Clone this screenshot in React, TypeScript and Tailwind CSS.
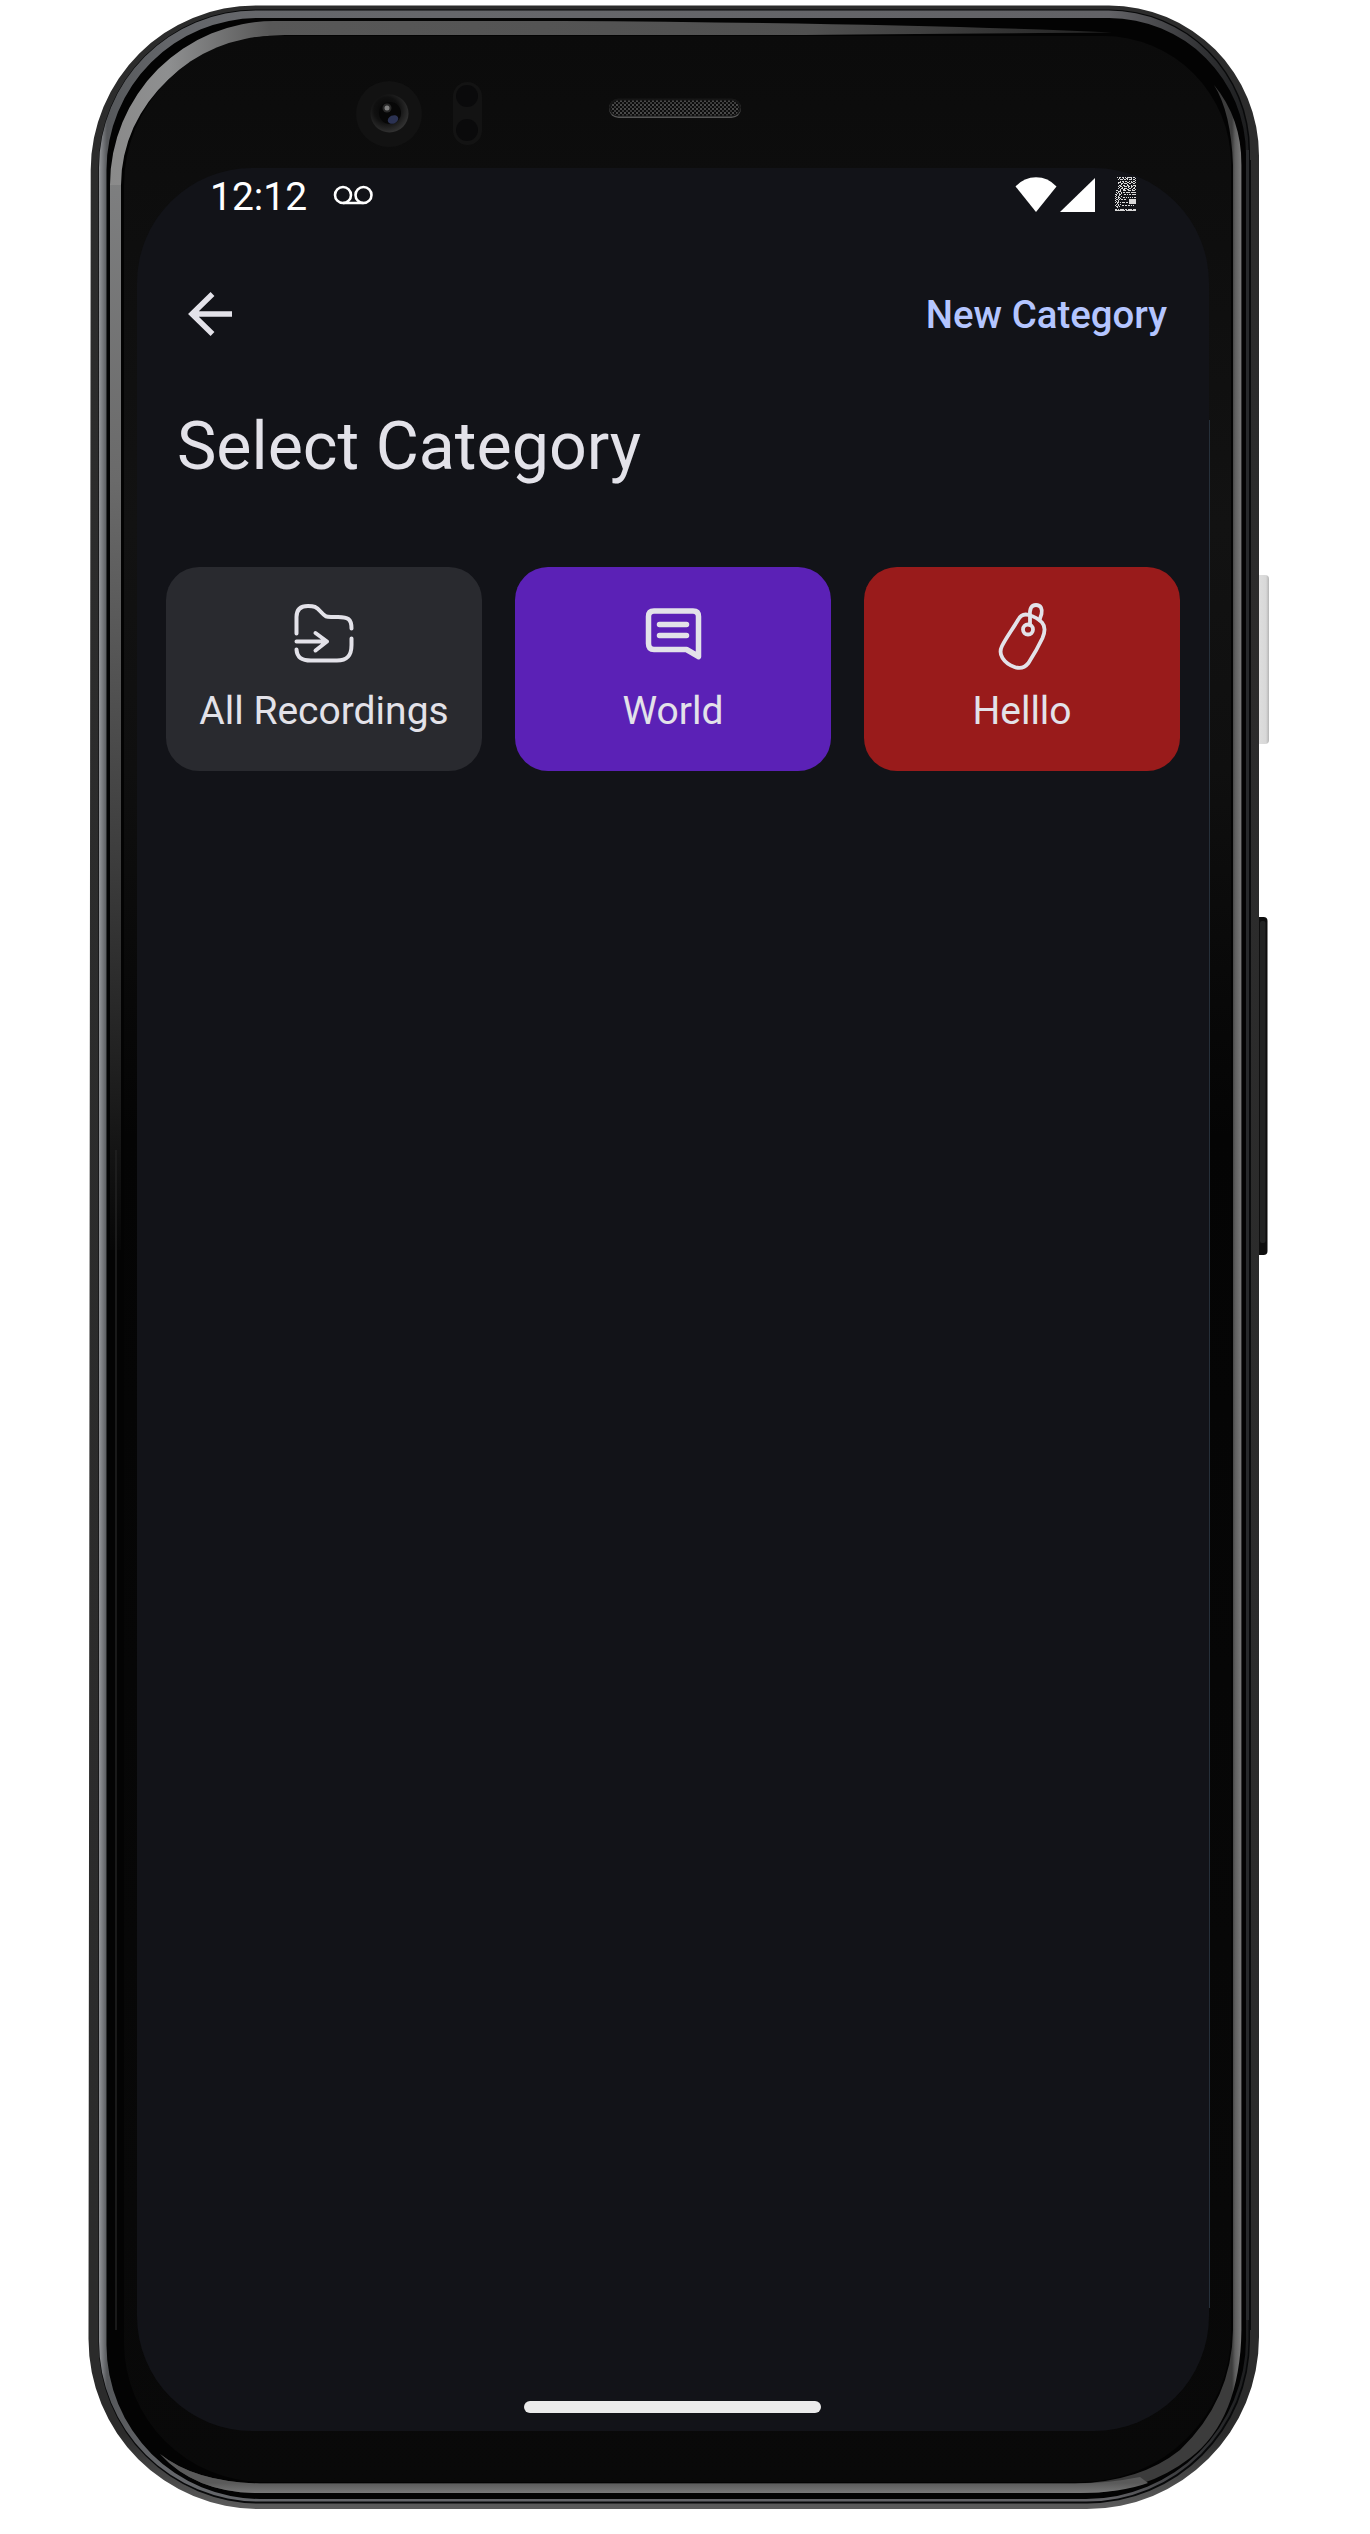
const rr = (l: number, t: number, r: number, b: number, tl: number, tr: number, br: number, bl: number) =>
  `M${l + tl} ${t}H${r - tr}A${tr} ${tr} 0 0 1 ${r} ${t + tr}V${b - br}A${br} ${br} 0 0 1 ${r - br} ${b}H${l + bl}A${bl} ${bl} 0 0 1 ${l} ${b - bl}V${t + tl}A${tl} ${tl} 0 0 1 ${l + tl} ${t}Z`;

function DeviceArt() {
  return (
    <svg className="absolute left-0 top-0 h-[2534px] w-[1370px]" viewBox="0 0 1370 2534" aria-hidden="true">
      <defs>
        <linearGradient id="shell" x1="0" y1="0" x2="0" y2="1">
          <stop offset="0" stopColor="#2c2c2c" />
          <stop offset=".93" stopColor="#2b2b2b" />
          <stop offset=".97" stopColor="#2b2b2b" />
          <stop offset="1" stopColor="#5c5c5c" />
        </linearGradient>
        <linearGradient id="band" x1="99" x2="1248" y1="0" y2="0" gradientUnits="userSpaceOnUse">
          <stop offset="0" stopColor="#94969a" />
          <stop offset=".007" stopColor="#56585b" />
          <stop offset=".06" stopColor="#64666a" />
          <stop offset=".3" stopColor="#66676b" />
          <stop offset=".88" stopColor="#626266" />
          <stop offset=".97" stopColor="#2c2d2f" />
          <stop offset="1" stopColor="#1c1d1e" />
        </linearGradient>
        <linearGradient id="rimTop" x1="108" x2="1115" y1="0" y2="0" gradientUnits="userSpaceOnUse">
          <stop offset="0" stopColor="#8a8a8a" />
          <stop offset=".06" stopColor="#8e8f90" />
          <stop offset=".16" stopColor="#585858" />
          <stop offset=".7" stopColor="#505050" />
          <stop offset="1" stopColor="#222" />
        </linearGradient>
        <linearGradient id="rimLeft" x1="0" x2="0" y1="150" y2="1250" gradientUnits="userSpaceOnUse">
          <stop offset="0" stopColor="#808182" />
          <stop offset=".3" stopColor="#6a6a6a" />
          <stop offset=".65" stopColor="#3c3c3c" />
          <stop offset="1" stopColor="#060606" />
        </linearGradient>
        <linearGradient id="rimRight" x1="1232" x2="1242" y1="0" y2="0" gradientUnits="userSpaceOnUse">
          <stop offset="0" stopColor="#3c3c3c" />
          <stop offset=".3" stopColor="#5e5e5e" />
          <stop offset=".85" stopColor="#767676" />
          <stop offset="1" stopColor="#555" />
        </linearGradient>
        <linearGradient id="rimBottom" x1="0" x2="0" y1="2483" y2="2493" gradientUnits="userSpaceOnUse">
          <stop offset="0" stopColor="#5a5a5a" />
          <stop offset="1" stopColor="#787878" />
        </linearGradient>
        <linearGradient id="glass" x1="0" x2="0" y1="0" y2="1">
          <stop offset="0" stopColor="#0b0b0b" />
          <stop offset=".2" stopColor="#121212" />
          <stop offset=".3" stopColor="#0f0f0f" />
          <stop offset=".45" stopColor="#040404" />
          <stop offset="1" stopColor="#090909" />
        </linearGradient>
        <linearGradient id="power" x1="0" x2="1" y1="0" y2="0">
          <stop offset="0" stopColor="#c4c4c4" />
          <stop offset=".3" stopColor="#dedede" />
          <stop offset=".8" stopColor="#d8d8d8" />
          <stop offset="1" stopColor="#b5b5b5" />
        </linearGradient>
        <radialGradient id="lens" cx=".42" cy=".4" r=".6">
          <stop offset="0" stopColor="#050505" />
          <stop offset=".55" stopColor="#101010" />
          <stop offset="1" stopColor="#303030" />
        </radialGradient>
        <pattern id="mesh" width="4" height="4" patternUnits="userSpaceOnUse">
          <rect width="4" height="4" fill="#0c0c0c" />
          <rect width="2" height="2" fill="#4a4a4a" />
          <rect x="2" y="2" width="2" height="2" fill="#3a3a3a" />
        </pattern>
      </defs>

      <rect x="1254" y="575" width="15" height="169" rx="4" fill="url(#power)" />
      <rect x="1250" y="917" width="17.5" height="338" rx="4" fill="#0e0e0e" />
      <rect x="1260" y="921" width="5.5" height="322" rx="2" fill="#222323" />

      <path
        d="M256 5.5H1109A150 150 0 0 1 1259 156V2337A172 172 0 0 1 1087 2509H258.5A170 170 0 0 1 88.5 2339L90.7 170A165 165 0 0 1 256 5.5Z"
        fill="url(#shell)"
      />
      <path d={rr(98.5, 9.5, 1250, 2503.5, 158, 141, 163, 161)} fill="#08090a" />
      <path d={rr(99, 10.5, 1248.5, 2501.5, 157, 140, 162, 160)} fill="url(#band)" />
      <path d={rr(106.5, 18, 1246, 2499, 152, 137, 160, 154)} fill="#030303" />
      <path d="M1246.5 150V2320M1250.5 160V2330" stroke="#0a0b0c" strokeWidth="1" fill="none" />
      <path d="M1247.5 150V2320" stroke="#27292b" strokeWidth="3" fill="none" />

      <path
        d="M110 187V185A164 164 0 0 1 274 21H560Q900 23 1112 32.5Q900 34 780 35H285A164 150 0 0 0 121 185V187Z"
        fill="url(#rimTop)"
      />
      <path d="M110 1250V185H121V1250Z" fill="url(#rimLeft)" />
      <path
        d="M1214 85Q1241.5 118 1241.5 165V2330Q1240 2420 1190 2458Q1145 2493 1080 2493H255Q195 2492 160 2454Q195 2482 260 2483.5H1075Q1140 2482 1180 2450Q1232 2400 1233 2330V165Q1231 112 1214 85Z"
        fill="url(#rimRight)"
      />
      <path d="M1140 2477Q1110 2483 1075 2483.5H260Q195 2482 160 2454Q195 2492 255 2493H1080Q1120 2493 1148 2483Z" fill="url(#rimBottom)" />
      <path d="M116 1150V2330" stroke="#222" strokeWidth="1.5" fill="none" />

      <path d={rr(124, 36, 1231, 2482, 150, 128, 150, 140)} fill="url(#glass)" />
      <path d="M1209.5 420V2308" stroke="#26303a" strokeWidth="1" />

      <circle cx="389" cy="114" r="33" fill="#121212" />
      <circle cx="389.500" cy="113.500" r="19" fill="url(#lens)" />
      <circle cx="390" cy="113" r="11" fill="#070707" />
      <ellipse cx="393" cy="119.500" rx="5.500" ry="4" fill="#2b3252" transform="rotate(-25 393 119.500)" />
      <circle cx="387" cy="108" r="2.500" fill="#858585" />
      <circle cx="387" cy="108" r="4.500" fill="#777" opacity=".3" />
      <rect x="453" y="82" width="29" height="63" rx="14.500" fill="#131313" />
      <circle cx="467" cy="96" r="11" fill="#0a0a0b" />
      <circle cx="467" cy="130" r="11" fill="#0a0a0b" />
      <rect x="609" y="99" width="132" height="19" rx="9.500" fill="#555" />
      <rect x="609" y="98.500" width="132" height="18" rx="9" fill="#161616" />
      <rect x="611" y="100.500" width="128" height="15" rx="7.500" fill="url(#mesh)" />
    </svg>
  );
}

const BATTERY = [
  "..#.##.##.#.#####.##.",
  "....#...#..##...#...#",
  "...#.###.##.#.###.##.",
  "....................#",
  ".....#.##.##..#.#.##.",
  "...###..#...##..##..#",
  "...#..##.###..##..##.",
  "......#.....#........",
  "....##..##..##..#.###",
  "...#.##..###.##.##..#",
  "....#..#.....#..#..#.",
  "...#..##.###..##..##.",
  ".....#..##..##...#..#",
  ".##..#..###..###.###.",
  "...###...............",
  ".#.#..#.##.####.#####",
  "..#.#.#..............",
  "##..##...##.#.##.####",
  ".#..#................",
  "#..#..#..............",
  ".#.##...##.#.#.#.#.##",
  "#..#.#................",
  ".##.#.##.##...#######",
  "#..#..........#######",
  ".#.#..........#######",
  "#.##.#.###.##.#######",
  "..#...........#######",
  ".#.#.#..............",
  "#..#...##.##.##.#.#..",
  ".##.#................",
  "..#..................",
  ".....................",
  "##.#.####.##.####.###",
  "##########.##########",
];

function BatteryGlyph() {
  return (
    <svg className="ml-5 h-9 w-[21px]" viewBox="0 0 21 36" fill="#d8d8d8" shapeRendering="crispEdges">
      {BATTERY.flatMap((row, y) =>
        [...row].map((c, x) => (c === "#" ? <rect key={`${x}-${y}`} x={x} y={y} width="1" height="1" /> : null)),
      )}
    </svg>
  );
}

function StatusBar() {
  return (
    <div className="mt-[7px] flex h-10 items-center pl-[73px] pr-[73px] text-white">
      <span className="mt-[3px] w-[98px] text-[39px] leading-10">12:12</span>
      <svg className="ml-[25px] h-5 w-10" viewBox="0 0 40 20" fill="none" stroke="currentColor" strokeWidth="2.600">
        <circle cx="10" cy="10" r="8" />
        <circle cx="30.500" cy="10" r="8" />
        <path d="M10 18H30.500" />
      </svg>
      <svg className="mb-0.5 ml-auto h-[35px] w-[42px]" viewBox="0 0 42 35" fill="currentColor">
        <path d="M21 35L.5 9.500Q9 .3 21 .3T41.500 9.500Z" />
      </svg>
      <svg className="mb-0.5 ml-[3px] h-[35px] w-[35px]" viewBox="0 0 35 35" fill="currentColor">
        <path d="M0 35H35V1Z" />
      </svg>
      <BatteryGlyph />
    </div>
  );
}

const FolderIcon = () => (
  <svg className="h-16 w-16" viewBox="0 0 64 64" fill="none" stroke="currentColor" strokeWidth="4" strokeLinecap="round" strokeLinejoin="round">
    <path d="M4.500 31.500V15C4.500 7 9 4 16 4C22 4 24 4.500 29 10C33.500 15 34.500 15 39 15H46C56 15 59.500 17 59.500 26.500" />
    <path d="M59.500 36.500V43C59.500 55 54 58.500 45 58.500H19C9 58.500 5 55 4.500 47.500" />
    <path d="M4.500 39.500H35M23.500 31L35 39.500L23.500 48.500" />
  </svg>
);

const ChatIcon = () => (
  <svg className="h-16 w-16" viewBox="0 0 64 64" fill="none" stroke="currentColor" strokeWidth="5.500" strokeLinecap="round" strokeLinejoin="round">
    <path d="M57.500 54.500V14.500Q57.500 9 52 9H13Q7.500 9 7.500 14.500V41.500Q7.500 47.500 13 47.500H45.500Z" />
    <path d="M18.500 22.500H45.500M18.500 33.500H45.500" />
  </svg>
);

const TagIcon = () => (
  <svg className="ml-0.5 h-[68px] w-16 overflow-visible" viewBox="0 0 64 68" fill="none" stroke="currentColor" strokeWidth="3.800" strokeLinecap="round" strokeLinejoin="round">
    <path d="M27 18C29.500 13 33 11.500 38 13C43 14.500 48 17.500 51 20.500C54.500 24.500 54.500 29 51.500 36C47.500 44.500 42 54 37.500 61C33.500 66 29 67 23.500 65C18 63 14 60 11.500 56C9 52 9 48 11 44C15 36 21 28 27 18Z" />
    <circle cx="37" cy="27.500" r="5" />
    <path d="M39 23V14C38.500 7 40 3 45 3C50 3 51.500 7 50.500 12L48.500 18" />
  </svg>
);

const CATEGORIES = [
  { name: "All Recordings", bg: "bg-[#292a2f]", Icon: FolderIcon },
  { name: "World", bg: "bg-[#5b21b6]", Icon: ChatIcon },
  { name: "Helllo", bg: "bg-[#991b1b]", Icon: TagIcon },
];

export default function App() {
  return (
    <div className="relative h-[2534px] w-[1370px] overflow-hidden bg-white pl-[137px] pt-[168px] font-['Roboto',sans-serif]">
      <DeviceArt />
      <main className="relative flex h-[2263px] w-[1072px] flex-col overflow-hidden rounded-[115px] bg-[#121318] text-[#e3e2e9]">
        <StatusBar />
        <header className="mt-[67px] flex h-16 items-center justify-between pl-[51px] pr-[42px]">
          <button aria-label="Back">
            <svg className="h-11 w-11" viewBox="0 0 44 44" fill="none" stroke="currentColor" strokeWidth="5.500">
              <path d="M44 22H4M24.500 2L4 22L24.500 42" />
            </svg>
          </button>
          <button className="mt-0.5 text-[38.400px] font-medium leading-none text-[#b4c5ff]">New Category</button>
        </header>
        <h1 className="mt-[60px] pl-10 text-[66.300px] leading-[80px]">Select Category</h1>
        <section className="mt-[81px] flex gap-[33px] pl-[29px]">
          {CATEGORIES.map(({ name, bg, Icon }) => (
            <button key={name} className={`flex h-[204px] w-[316px] shrink-0 flex-col items-center rounded-[33px] pt-[35px] ${bg}`}>
              <span className="flex h-[68px] items-start">
                <Icon />
              </span>
              <span className="mt-[18px] text-[39px] leading-[46px]">{name}</span>
            </button>
          ))}
        </section>
        <div className="mb-[18px] ml-[387px] mt-auto h-3 w-[297px] rounded-full bg-[#ebebeb]" />
      </main>
    </div>
  );
}
